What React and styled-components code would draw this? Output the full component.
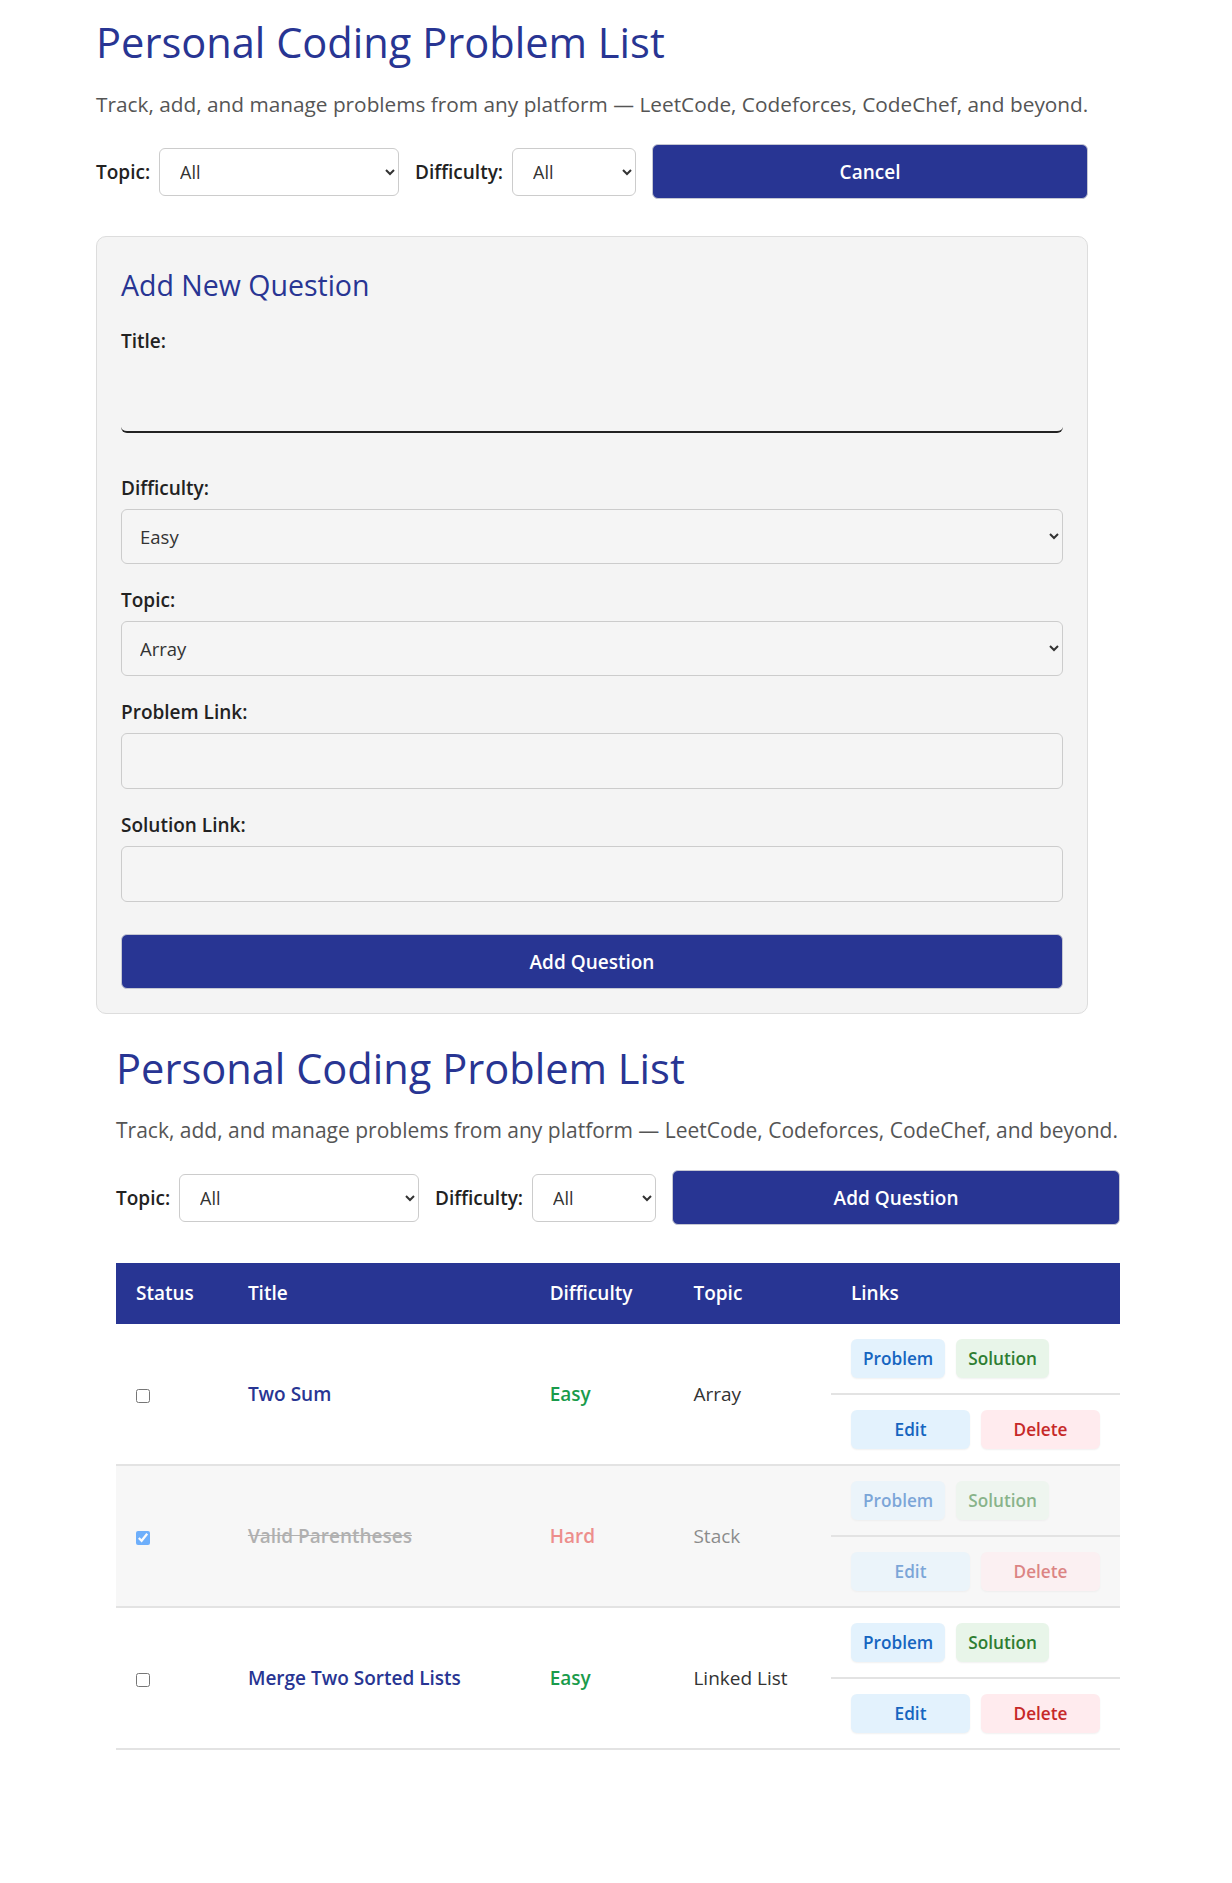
import React from "react";
import styled, { createGlobalStyle } from "styled-components";

const GlobalStyle = createGlobalStyle`
  body {
    margin: 0;
    background: #ffffff;
    font-family: "Open Sans", "Noto Sans", "Liberation Sans", sans-serif;
    color: #222;
  }
  * {
    box-sizing: border-box;
  }
`;

const NAVY = "#283593";

const Page = styled.div`
  display: flex;
  flex-direction: column;
  padding-top: 14px;
  padding-bottom: 131px;
`;

const Section = styled.section`
  width: ${(p) => p.$width}px;
  margin-left: ${(p) => p.$left}px;
`;

const Title = styled.h1`
  margin: 0;
  font-size: 41.6px;
  font-weight: 400;
  color: ${NAVY};
  line-height: 57px;
`;

const Subtitle = styled.p`
  margin: 20px 0 0;
  font-size: ${(p) => p.$size}px;
  color: #555;
  line-height: 27px;
  white-space: nowrap;
`;

const FilterBar = styled.div`
  display: flex;
  align-items: center;
  margin-top: 26px;
`;

const FilterLabel = styled.label`
  font-size: 19px;
  font-weight: 600;
  color: #222;
  margin-right: 9px;
`;

const FilterSelect = styled.select`
  width: ${(p) => p.$width}px;
  height: 48px;
  margin-right: 16px;
  padding: 0 16px;
  font-family: inherit;
  font-size: 18px;
  color: #333;
  background: #fff;
  border: 1px solid #ccc;
  border-radius: 6px;
`;

const PrimaryButton = styled.button`
  flex: ${(p) => (p.$block ? "none" : 1)};
  width: ${(p) => (p.$block ? "100%" : "auto")};
  height: 55px;
  font-family: inherit;
  font-size: 19px;
  font-weight: 600;
  color: #fff;
  background: ${NAVY};
  border: 1px solid #c5c7d2;
  border-radius: 6px;
  cursor: pointer;
`;

const FormCard = styled.form`
  margin: 37px 0 26px 96px;
  width: 992px;
  padding: 24px;
  background: #f4f4f4;
  border: 1px solid #ddd;
  border-radius: 10px;
`;

const FormHeading = styled.h2`
  margin: 5px 0 0;
  font-size: 28.5px;
  font-weight: 400;
  line-height: 38px;
  color: ${NAVY};
`;

const Field = styled.div`
  display: flex;
  flex-direction: column;
  margin-top: ${(p) => p.$top}px;
`;

const FieldLabel = styled.label`
  font-size: 19px;
  font-weight: 600;
  line-height: 25px;
  color: #222;
  margin-bottom: 8px;
`;

const LineInput = styled.input`
  height: 71px;
  border: none;
  border-bottom: 2px solid #222;
  border-radius: 6px;
  background: transparent;
  font-family: inherit;
  font-size: 18px;
`;

const BoxInput = styled.input`
  height: 56px;
  padding: 0 14px;
  border: 1px solid #ccc;
  border-radius: 6px;
  background: #f5f5f5;
  font-family: inherit;
  font-size: 18px;
`;

const BoxSelect = styled.select`
  height: 55px;
  padding: 0 14px;
  border: 1px solid #ccc;
  border-radius: 6px;
  background: #f5f5f5;
  font-family: inherit;
  font-size: 18.5px;
  color: #333;
`;

const SubmitRow = styled.div`
  margin-top: 32px;
  display: flex;
`;

const Table = styled.table`
  width: 100%;
  margin-top: 38px;
  border-collapse: collapse;
  font-size: 19px;
`;

const HeadCell = styled.th`
  padding: 18px 20px;
  text-align: left;
  font-weight: 600;
  line-height: 25px;
  color: #fff;
  background: ${NAVY};
  width: ${(p) => p.$width || "auto"};
`;

const Row = styled.tr`
  background: ${(p) => (p.$done ? "#f7f7f7" : "#fff")};
`;

const Cell = styled.td`
  padding: ${(p) => (p.$links ? "15px 20px" : "0 20px")};
  border-bottom: 2px solid #e3e3e3;
  vertical-align: middle;
  opacity: ${(p) => (p.$done ? 0.55 : 1)};
`;

const Check = styled.input`
  width: 14px;
  height: 14px;
  margin: 0;
  vertical-align: middle;
`;

const ProblemTitle = styled.span`
  font-weight: 600;
  color: ${(p) => (p.$done ? "#777" : NAVY)};
  text-decoration: ${(p) => (p.$done ? "line-through" : "none")};
`;

const diffColors = { Easy: "#1a9b4b", Medium: "#f0a020", Hard: "#e53935" };

const Difficulty = styled.span`
  font-weight: 600;
  color: ${(p) => diffColors[p.$level]};
`;

const Topic = styled.span`
  color: #333;
`;

const Actions = styled.div`
  display: flex;
  gap: 11px;
`;

const tones = {
  blue: { bg: "#e3f2fd", fg: "#1565c0" },
  green: { bg: "#e8f5e9", fg: "#2e7d32" },
  red: { bg: "#ffebee", fg: "#c62828" },
};

const Chip = styled.a`
  display: inline-flex;
  align-items: center;
  justify-content: center;
  height: 39px;
  min-width: ${(p) => (p.$wide ? "119px" : "auto")};
  padding: 0 12px;
  border: none;
  font-family: inherit;
  font-size: 17.2px;
  font-weight: 600;
  text-decoration: none;
  border-radius: 6px;
  background: ${(p) => tones[p.$tone].bg};
  color: ${(p) => tones[p.$tone].fg};
  box-shadow: 0 1px 2px rgba(0, 0, 0, 0.06);
  cursor: pointer;
`;

const problems = [
  { id: 1, title: "Two Sum", level: "Easy", topic: "Array", done: false },
  { id: 2, title: "Valid Parentheses", level: "Hard", topic: "Stack", done: true },
  { id: 3, title: "Merge Two Sorted Lists", level: "Easy", topic: "Linked List", done: false },
];

function Header({ buttonText, textSize }) {
  return (
    <>
      <Title>Personal Coding Problem List</Title>
      <Subtitle $size={textSize}>
        Track, add, and manage problems from any platform — LeetCode,
        Codeforces, CodeChef, and beyond.
      </Subtitle>
      <FilterBar>
        <FilterLabel>Topic:</FilterLabel>
        <FilterSelect $width={240} defaultValue="All">
          <option>All</option>
          <option>Array</option>
          <option>Stack</option>
          <option>Linked List</option>
        </FilterSelect>
        <FilterLabel>Difficulty:</FilterLabel>
        <FilterSelect $width={124} defaultValue="All">
          <option>All</option>
          <option>Easy</option>
          <option>Medium</option>
          <option>Hard</option>
        </FilterSelect>
        <PrimaryButton type="button">{buttonText}</PrimaryButton>
      </FilterBar>
    </>
  );
}

function QuestionForm() {
  return (
    <FormCard onSubmit={(e) => e.preventDefault()}>
      <FormHeading>Add New Question</FormHeading>
      <Field $top={25}>
        <FieldLabel>Title:</FieldLabel>
        <LineInput type="text" />
      </Field>
      <Field $top={43}>
        <FieldLabel>Difficulty:</FieldLabel>
        <BoxSelect defaultValue="Easy">
          <option>Easy</option>
          <option>Medium</option>
          <option>Hard</option>
        </BoxSelect>
      </Field>
      <Field $top={24}>
        <FieldLabel>Topic:</FieldLabel>
        <BoxSelect defaultValue="Array">
          <option>Array</option>
          <option>Stack</option>
          <option>Linked List</option>
        </BoxSelect>
      </Field>
      <Field $top={24}>
        <FieldLabel>Problem Link:</FieldLabel>
        <BoxInput type="text" />
      </Field>
      <Field $top={24}>
        <FieldLabel>Solution Link:</FieldLabel>
        <BoxInput type="text" />
      </Field>
      <SubmitRow>
        <PrimaryButton $block type="submit">
          Add Question
        </PrimaryButton>
      </SubmitRow>
    </FormCard>
  );
}

function ProblemTable() {
  return (
    <Table>
      <thead>
        <tr>
          <HeadCell $width="112px">Status</HeadCell>
          <HeadCell $width="303px">Title</HeadCell>
          <HeadCell $width="144px">Difficulty</HeadCell>
          <HeadCell $width="158px">Topic</HeadCell>
          <HeadCell>Links</HeadCell>
        </tr>
      </thead>
      <tbody>
        {problems.map((p) => (
          <React.Fragment key={p.id}>
            <Row $done={p.done}>
              <Cell rowSpan={2} $done={p.done}>
                <Check type="checkbox" defaultChecked={p.done} />
              </Cell>
              <Cell rowSpan={2} $done={p.done}>
                <ProblemTitle $done={p.done}>{p.title}</ProblemTitle>
              </Cell>
              <Cell rowSpan={2} $done={p.done}>
                <Difficulty $level={p.level}>{p.level}</Difficulty>
              </Cell>
              <Cell rowSpan={2} $done={p.done}>
                <Topic>{p.topic}</Topic>
              </Cell>
              <Cell $links $done={p.done}>
                <Actions>
                  <Chip $tone="blue">Problem</Chip>
                  <Chip $tone="green">Solution</Chip>
                </Actions>
              </Cell>
            </Row>
            <Row $done={p.done}>
              <Cell $links $done={p.done}>
                <Actions>
                  <Chip $tone="blue" $wide as="button">
                    Edit
                  </Chip>
                  <Chip $tone="red" $wide as="button">
                    Delete
                  </Chip>
                </Actions>
              </Cell>
            </Row>
          </React.Fragment>
        ))}
      </tbody>
    </Table>
  );
}

export default function App() {
  return (
    <>
      <GlobalStyle />
      <Page>
        <Section $left={96} $width={992}>
          <Header buttonText="Cancel" textSize={20.8} />
        </Section>
        <QuestionForm />
        <Section $left={116} $width={1004}>
          <Header buttonText="Add Question" textSize={21} />
          <ProblemTable />
        </Section>
      </Page>
    </>
  );
}
